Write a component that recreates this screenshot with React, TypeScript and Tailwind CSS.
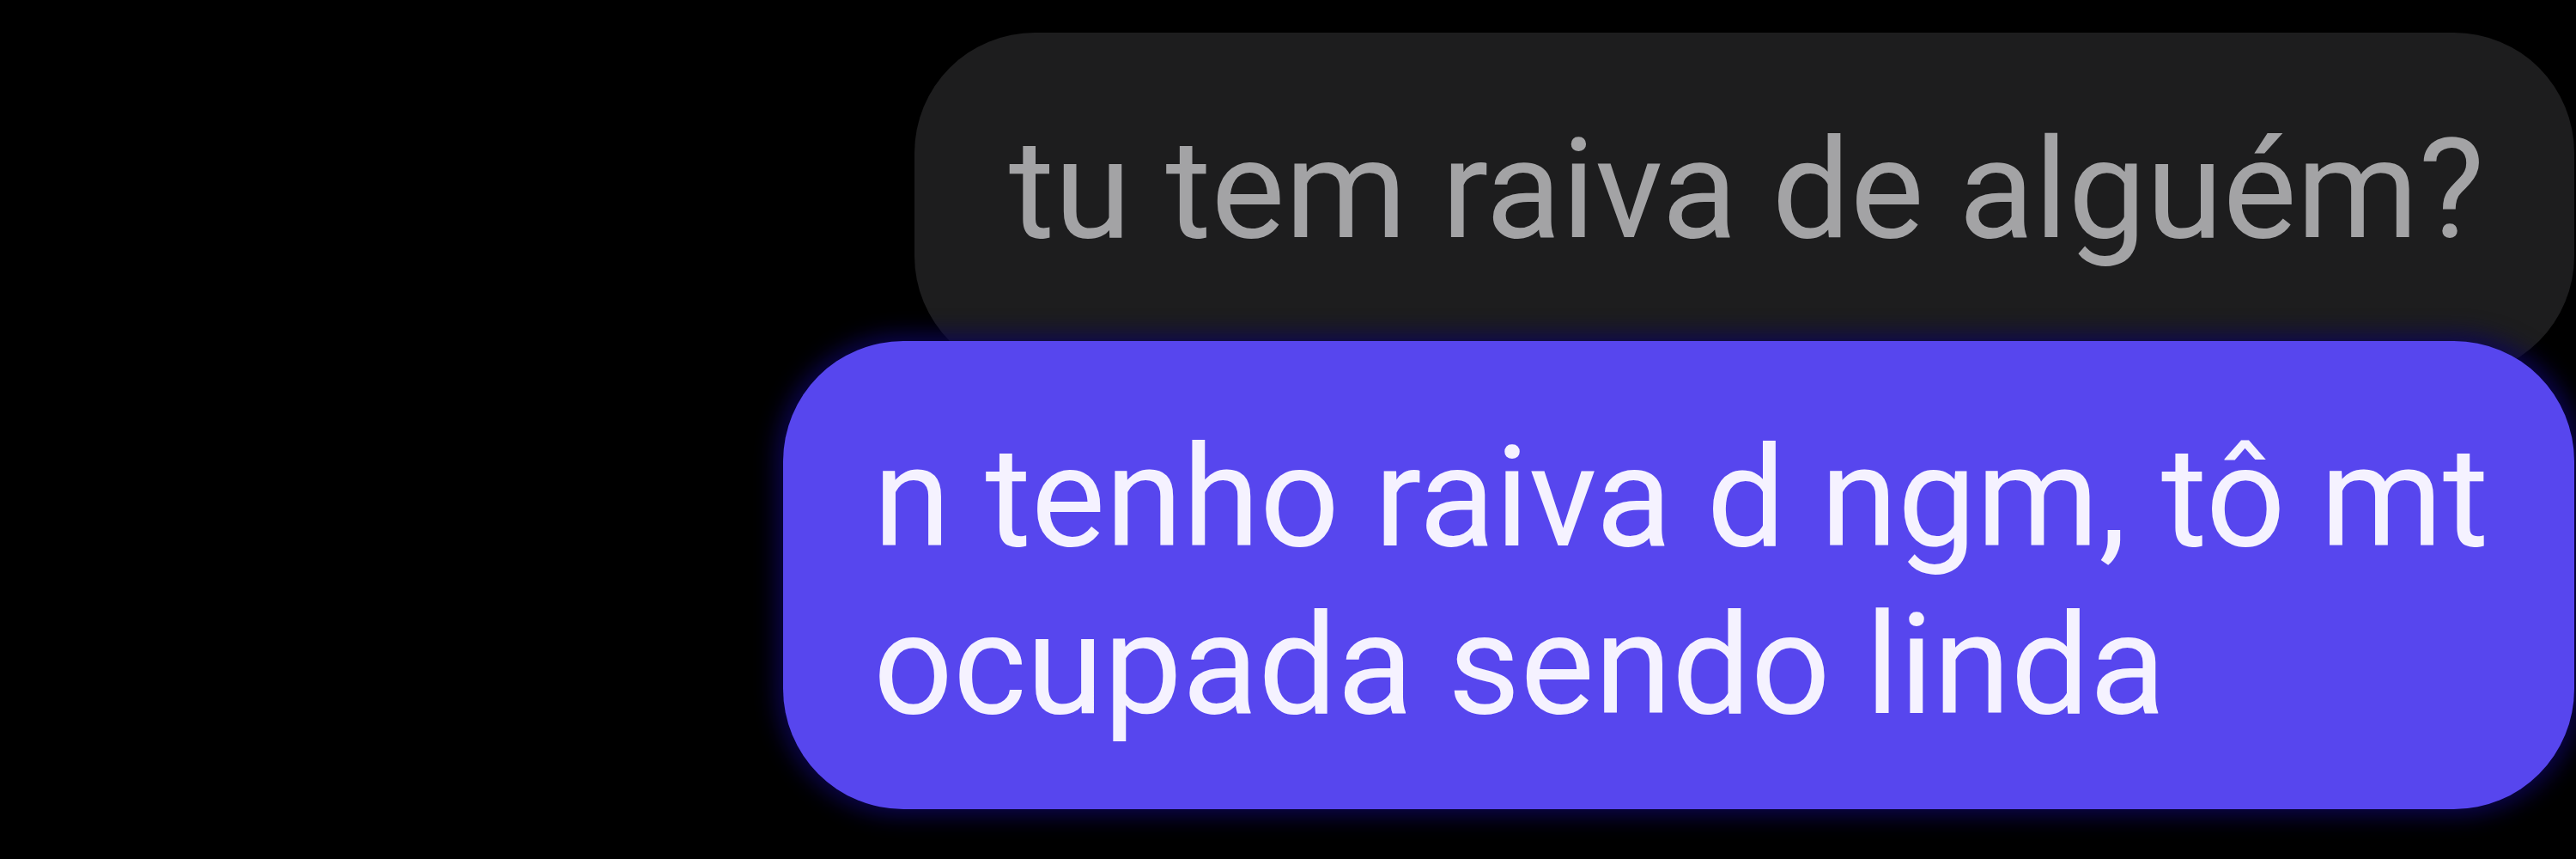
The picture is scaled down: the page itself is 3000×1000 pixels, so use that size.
export default function App() {
  return (
    <div className="flex h-[1000px] w-[3000px] flex-col items-end overflow-hidden bg-black pt-[38px] pr-[2px] font-['Roboto',sans-serif]">
      <div className="h-[400px] w-[1933px] rounded-[140px] bg-[#1d1d1e] pt-[86px] pl-[110px]">
        <p className="whitespace-nowrap text-[162px] leading-[195px] text-[#a3a3a5]">
          tu tem raiva de alguém?
        </p>
      </div>
      <div className="relative z-10 mt-[-41px] w-[2086px] rounded-[140px] bg-[#5746ee] pt-[85px] pb-[70px] pl-[105px] shadow-[0_0_26px_8px_rgba(12,6,85,0.9)]">
        <p className="whitespace-nowrap text-[163px] leading-[195px] text-[#f5f2ff]">
          n tenho raiva d ngm, tô mt
          <br />
          ocupada sendo linda
        </p>
      </div>
    </div>
  );
}
